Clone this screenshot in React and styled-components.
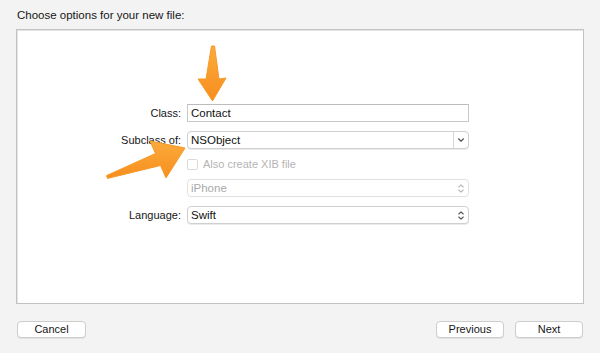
import React from "react";
import styled, { createGlobalStyle } from "styled-components";

const Global = createGlobalStyle`
  html, body { margin: 0; padding: 0; background: #f3f3f3; }
  body { font-family: "Liberation Sans", Arial, Helvetica, sans-serif; color: #1c1c1c; }
  #root { width: 600px; height: 353px; }
`;

const Page = styled.div`
  position: relative;
  width: 600px;
  height: 353px;
  background: #f3f3f3;
  display: flex;
  flex-direction: column;
  box-sizing: border-box;
  padding: 0 16px;
`;

const Title = styled.div`
  height: 29px;
  box-sizing: border-box;
  padding: 8px 0 0 1px;
  font-size: 11.5px;
  line-height: 14px;
  color: #161616;
`;

const Panel = styled.div`
  height: 275px;
  box-sizing: border-box;
  background: #fff;
  border: 1px solid #c2c2c2;
  box-shadow: inset 1px 1px 0 #e4e4e4;
  padding: 74px 0 0 0;
`;

const Form = styled.div`
  display: grid;
  grid-template-columns: 164px 282px;
  column-gap: 6px;
  row-gap: 9px;
  align-items: center;
`;

const Label = styled.div`
  text-align: right;
  font-size: 11px;
  line-height: 14px;
  color: #161616;
`;

const TextField = styled.div`
  height: 18px;
  box-sizing: border-box;
  border: 1px solid #c8c8c8;
  border-top-color: #bcbcbc;
  background: #fff;
  font-size: 11.5px;
  line-height: 16px;
  padding-left: 3px;
  color: #111;
`;

const Popup = styled.div`
  height: 18px;
  box-sizing: border-box;
  border: 1px solid ${(p) => (p.$disabled ? "#e1e1e1" : "#cfcfcf")};
  border-radius: 4px;
  background: #fff;
  box-shadow: ${(p) => (p.$disabled ? "none" : "0 1px 0 rgba(0,0,0,0.08)")};
  display: flex;
  align-items: center;
  font-size: 11.5px;
  line-height: 16px;
  color: ${(p) => (p.$disabled ? "#a8a8a8" : "#111")};
`;

const PopupText = styled.div`
  flex: 1;
  padding-left: 3px;
`;

const ComboArrow = styled.div`
  width: 14px;
  height: 100%;
  border-left: 1px solid #d6d6d6;
  display: flex;
  align-items: center;
  justify-content: center;
`;

const Stepper = styled.div`
  width: 14px;
  display: flex;
  align-items: center;
  justify-content: center;
`;

const CheckRow = styled.div`
  display: flex;
  align-items: center;
  gap: 5px;
  height: 12px;
  font-size: 11px;
  color: #b4b4b4;
`;

const Box = styled.div`
  width: 11px;
  height: 11px;
  box-sizing: border-box;
  border: 1px solid #dadada;
  border-radius: 2px;
  background: #fff;
`;

const Footer = styled.div`
  display: flex;
  align-items: flex-start;
  padding: 17px 1px 0 1px;
`;

const Spacer = styled.div`
  flex: 1;
`;

const Button = styled.div`
  width: ${(p) => p.$w}px;
  height: 17px;
  box-sizing: border-box;
  margin-left: ${(p) => p.$ml || 0}px;
  background: #fff;
  border: 1px solid #cdcdcd;
  border-radius: 4px;
  box-shadow: 0 1px 0 rgba(0,0,0,0.07);
  font-size: 11px;
  line-height: 15px;
  text-align: center;
  color: #161616;
`;

const Overlay = styled.svg`
  position: absolute;
  left: 0;
  top: 0;
  pointer-events: none;
`;

const DownChevron = () => (
  <svg width="8" height="6" viewBox="0 0 8 6">
    <path d="M1.5 1.8 L4 4.2 L6.5 1.8" fill="none" stroke="#555" strokeWidth="1.2" strokeLinecap="round" strokeLinejoin="round" />
  </svg>
);

const UpDown = ({ color = "#555" }) => (
  <svg width="8" height="11" viewBox="0 0 8 11">
    <path d="M1.8 4 L4 1.8 L6.2 4" fill="none" stroke={color} strokeWidth="1.1" strokeLinecap="round" strokeLinejoin="round" />
    <path d="M1.8 7 L4 9.2 L6.2 7" fill="none" stroke={color} strokeWidth="1.1" strokeLinecap="round" strokeLinejoin="round" />
  </svg>
);

export default function App() {
  return (
    <>
      <Global />
      <Page>
        <Title>Choose options for your new file:</Title>
        <Panel>
          <Form>
            <Label>Class:</Label>
            <TextField>Contact</TextField>

            <Label>Subclass of:</Label>
            <Popup>
              <PopupText>NSObject</PopupText>
              <ComboArrow>
                <DownChevron />
              </ComboArrow>
            </Popup>

            <Label />
            <CheckRow>
              <Box />
              <span>Also create XIB file</span>
            </CheckRow>

            <Label />
            <Popup $disabled>
              <PopupText>iPhone</PopupText>
              <Stepper>
                <UpDown color="#b8b8b8" />
              </Stepper>
            </Popup>

            <Label>Language:</Label>
            <Popup>
              <PopupText>Swift</PopupText>
              <Stepper>
                <UpDown />
              </Stepper>
            </Popup>
          </Form>
        </Panel>
        <Footer>
          <Button $w={69}>Cancel</Button>
          <Spacer />
          <Button $w={68}>Previous</Button>
          <Button $w={68} $ml={11}>Next</Button>
        </Footer>
        <Overlay width="600" height="353" viewBox="0 0 600 353">
          <defs>
            <linearGradient id="og" x1="0" y1="0" x2="0" y2="1">
              <stop offset="0" stopColor="#fbab3c" />
              <stop offset="1" stopColor="#f68e1e" />
            </linearGradient>
          </defs>
          <path
            d="M211.5 46 L214.5 46 L219 79 L226 78 L212.5 101 L198 79 L206 79 Z"
            fill="url(#og)"
            stroke="#f79a26"
            strokeWidth="1"
            strokeLinejoin="round"
          />
          <path
            d="M106.5 175.6 L155.5 153.5 L150 141 L185 148 L166 178 L160.5 165.5 L107.5 178.4 Z"
            fill="url(#og)"
            stroke="#f79a26"
            strokeWidth="1"
            strokeLinejoin="round"
          />
        </Overlay>
      </Page>
    </>
  );
}
